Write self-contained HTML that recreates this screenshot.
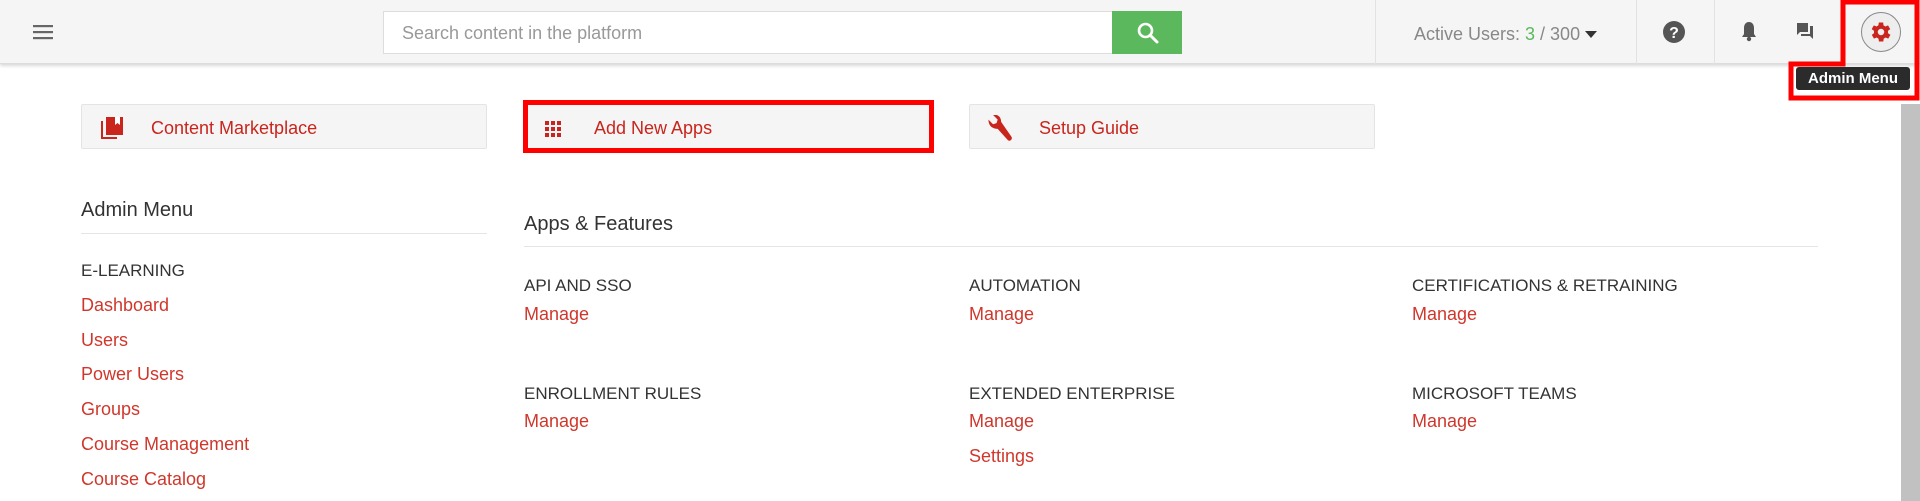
<!DOCTYPE html>
<html><head><meta charset="utf-8"><style>
*{margin:0;padding:0;box-sizing:border-box}
body{width:1920px;height:501px;overflow:hidden;background:#fff;font-family:"Liberation Sans",sans-serif;position:relative;color:#333}
.a{position:absolute;white-space:nowrap}
.hdr{position:absolute;left:0;top:0;width:1920px;height:64px;background:#f5f5f5;border-bottom:1px solid #ddd;box-shadow:0 2px 3px rgba(0,0,0,.15)}
.vd{position:absolute;top:0;width:1px;height:64px;background:#e2e2e2}
.btn{position:absolute;top:104px;height:45px;width:406px;background:#f5f5f5;border:1px solid #e4e4e4;border-radius:2px}
.btn span{position:absolute;left:69px;top:13px;font-size:18px;color:#c9251d}
.red{color:#d0372c;font-size:18px}
.lbl{font-size:17px;color:#333}
.h{font-size:20px;color:#333}
</style></head><body>
<div class="hdr"></div>
<svg class="a" style="left:33px;top:24px" width="20" height="16"><rect x="0" y="1" width="20" height="2.2" fill="#666"/><rect x="0" y="7" width="20" height="2.2" fill="#666"/><rect x="0" y="13" width="20" height="2.2" fill="#666"/></svg>
<div class="a" style="left:383px;top:11px;width:730px;height:43px;background:#fff;border:1px solid #ddd;border-right:none"></div>
<div class="a" style="left:402px;top:23px;font-size:18px;color:#999">Search content in the platform</div>
<div class="a" style="left:1112px;top:11px;width:70px;height:43px;background:#5cb85c"></div>
<svg class="a" style="left:1136px;top:21px" width="24" height="24"><circle cx="9.5" cy="9.5" r="6.5" stroke="#fff" stroke-width="2.6" fill="none"/><line x1="14.5" y1="14.5" x2="21" y2="21" stroke="#fff" stroke-width="3" stroke-linecap="round"/></svg>
<div class="vd" style="left:1375px"></div><div class="vd" style="left:1636px"></div><div class="vd" style="left:1714px"></div>
<div class="a" style="left:1414px;top:24px;font-size:18px;color:#888">Active Users: <span style="color:#5cb85c">3</span> / 300</div>
<svg class="a" style="left:1585px;top:31px" width="12" height="8"><path d="M0 0H12L6 7Z" fill="#333"/></svg>
<svg class="a" style="left:1663px;top:21px" width="22" height="22"><circle cx="11" cy="11" r="11" fill="#555"/><text x="11" y="17" font-size="16" font-weight="bold" fill="#fff" text-anchor="middle" font-family="Liberation Sans">?</text></svg>
<svg class="a" style="left:1741px;top:21px" width="16" height="22"><path d="M8 1C4.5 1 3 4 3 7V13L1 16H15L13 13V7C13 4 11.5 1 8 1Z" fill="#555"/><circle cx="8" cy="18" r="2.2" fill="#555"/></svg>
<svg class="a" style="left:1796px;top:22px" width="18" height="18"><path d="M1 1H12V10H4L1 13Z" fill="#555"/><path d="M14 4H17V17L14 14H5V12H14Z" fill="#555"/></svg>
<div class="a" style="left:1861px;top:12px;width:40px;height:40px;border-radius:50%;border:1.5px solid #888;background:#eee"></div>
<svg class="a" style="left:1868px;top:19px" width="26" height="26" viewBox="0 0 24 24"><path fill="#c9251d" d="M19.4 13a7.5 7.5 0 0 0 0-2l2.1-1.6-2-3.5-2.5 1a7 7 0 0 0-1.7-1L15 3.2h-4l-.4 2.7a7 7 0 0 0-1.7 1l-2.5-1-2 3.5L6.6 11a7.5 7.5 0 0 0 0 2l-2.1 1.6 2 3.5 2.5-1a7 7 0 0 0 1.7 1l.4 2.7h4l.4-2.7a7 7 0 0 0 1.7-1l2.5 1 2-3.5zM13 15a3 3 0 1 1 0-6 3 3 0 0 1 0 6z" transform="translate(-1 0)"/></svg>
<div class="a" style="left:1901px;top:104px;width:19px;height:397px;background:#c1c1c1"></div>
<div class="a" style="left:1796px;top:67px;width:114px;height:23px;background:#2b2b2b;border-radius:3px;color:#fff;font-weight:bold;font-size:15px;line-height:23px;text-align:center">Admin Menu</div>
<svg class="a" style="left:0;top:0" width="1920" height="110"><path d="M1843 2H1917V98H1791V64H1843Z" fill="none" stroke="#f00" stroke-width="5"/></svg>

<div class="btn" style="left:81px"><span>Content Marketplace</span></div>
<svg class="a" style="left:100px;top:116px" width="24" height="24"><path d="M1 5V23H17V21H3V5Z" fill="#c9251d"/><path d="M6 1H23V19H6Z" fill="#c9251d"/><path d="M15 1V9L17.5 7L20 9V1Z" fill="#fff"/></svg>
<div class="btn" style="left:524px"><span>Add New Apps</span></div>
<svg class="a" style="left:545px;top:121px" width="16" height="16"><g fill="#c9251d"><rect x="0" y="0" width="4" height="4"/><rect x="6" y="0" width="4" height="4"/><rect x="12" y="0" width="4" height="4"/><rect x="0" y="6" width="4" height="4"/><rect x="6" y="6" width="4" height="4"/><rect x="12" y="6" width="4" height="4"/><rect x="0" y="12" width="4" height="4"/><rect x="6" y="12" width="4" height="4"/><rect x="12" y="12" width="4" height="4"/></g></svg>
<div class="a" style="left:523px;top:100px;width:411px;height:53px;border:5px solid #f00"></div>
<div class="btn" style="left:969px"><span>Setup Guide</span></div>
<svg class="a" style="left:986px;top:115px" width="28" height="30" viewBox="0 0 24 26"><path fill="#c9251d" d="M2 4 6 8 9 7 10 4 6 0C9-1 13 1 13 6L22 19C23 21 21 23 19 22L10 12C5 12 2 9 2 4Z"/></svg>

<div class="a h" style="left:81px;top:199px">Admin Menu</div>
<div class="a" style="left:81px;top:233px;width:406px;height:1px;background:#e5e5e5"></div>
<div class="a lbl" style="left:81px;top:261px">E-LEARNING</div>
<div class="a red" style="left:81px;top:295px">Dashboard</div>
<div class="a red" style="left:81px;top:330px">Users</div>
<div class="a red" style="left:81px;top:364px">Power Users</div>
<div class="a red" style="left:81px;top:399px">Groups</div>
<div class="a red" style="left:81px;top:434px">Course Management</div>
<div class="a red" style="left:81px;top:469px">Course Catalog</div>

<div class="a h" style="left:524px;top:213px">Apps &amp; Features</div>
<div class="a" style="left:524px;top:246px;width:1294px;height:1px;background:#e5e5e5"></div>
<div class="a lbl" style="left:524px;top:276px">API AND SSO</div>
<div class="a red" style="left:524px;top:304px">Manage</div>
<div class="a lbl" style="left:969px;top:276px">AUTOMATION</div>
<div class="a red" style="left:969px;top:304px">Manage</div>
<div class="a lbl" style="left:1412px;top:276px">CERTIFICATIONS &amp; RETRAINING</div>
<div class="a red" style="left:1412px;top:304px">Manage</div>
<div class="a lbl" style="left:524px;top:384px">ENROLLMENT RULES</div>
<div class="a red" style="left:524px;top:411px">Manage</div>
<div class="a lbl" style="left:969px;top:384px">EXTENDED ENTERPRISE</div>
<div class="a red" style="left:969px;top:411px">Manage</div>
<div class="a red" style="left:969px;top:446px">Settings</div>
<div class="a lbl" style="left:1412px;top:384px">MICROSOFT TEAMS</div>
<div class="a red" style="left:1412px;top:411px">Manage</div>
</body></html>
